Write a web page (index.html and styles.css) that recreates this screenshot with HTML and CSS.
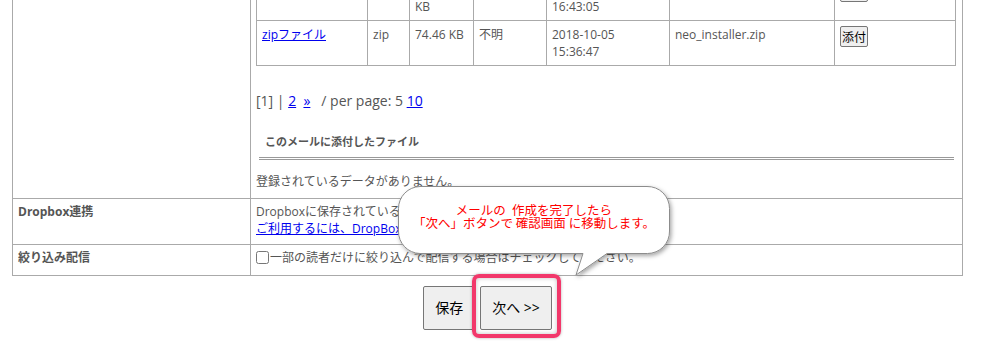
FILE: index.html
```html
<!DOCTYPE html>
<html lang="ja">
<head>
    <meta charset="UTF-8">
    <title>メール作成</title>
    <link rel="stylesheet" href="styles.css">
</head>
<body>
<div class="wrap">
    <table class="form-table">
        <colgroup>
            <col class="col-label">
            <col>
        </colgroup>
        <tr>
            <th></th>
            <td class="files-cell">
                <table class="files">
                    <colgroup>
                        <col class="c-name"><col class="c-type"><col class="c-size"><col class="c-dl"><col class="c-date"><col class="c-file"><col>
                    </colgroup>
                    <tr>
                        <td><a href="###">PDFファイル</a></td>
                        <td>pdf</td>
                        <td>1,536.20 KB</td>
                        <td>不明</td>
                        <td>2018-10-04<br>16:43:05</td>
                        <td>sample_manual.pdf</td>
                        <td><button class="attach" type="button">添付</button></td>
                    </tr>
                    <tr>
                        <td><a href="###">zipファイル</a></td>
                        <td>zip</td>
                        <td>74.46 KB</td>
                        <td>不明</td>
                        <td>2018-10-05<br>15:36:47</td>
                        <td>neo_installer.zip</td>
                        <td><button class="attach" type="button">添付</button></td>
                    </tr>
                </table>
                <p class="pager">[1] | <a href="###">2</a>&nbsp; <a href="###">&raquo;</a>&nbsp;&nbsp; / per page: 5 <a href="###">10</a></p>
                <h3 class="sub-title">このメールに添付したファイル</h3>
                <p class="empty">登録されているデータがありません。</p>
            </td>
        </tr>
        <tr>
            <th>Dropbox連携</th>
            <td>Dropboxに保存されているファイルを添付できます。<br><a href="###">ご利用するには、DropBoxとの連携設定が必要です。</a></td>
        </tr>
        <tr class="last-row">
            <th>絞り込み配信</th>
            <td><label><input type="checkbox" class="check">一部の読者だけに絞り込んで配信する場合はチェックしてください。</label></td>
        </tr>
    </table>

    <div class="actions">
        <button class="btn" type="button">保存</button>
        <span class="next-wrap"><button class="btn" type="button">次へ &gt;&gt;</button></span>

        <div class="bubble">
            <svg width="290" height="100" viewBox="0 0 290 100">
                <defs>
                    <filter id="shadow" x="-10%" y="-10%" width="120%" height="130%">
                        <feDropShadow dx="1.5" dy="2" stdDeviation="2" flood-color="#000" flood-opacity="0.35"/>
                    </filter>
                </defs>
                <path d="M30 5.5H257A22 22 0 0 1 279.5 27.5V50A22 22 0 0 1 257.5 72.5H217L186 94L193 72.5H30A22 22 0 0 1 8.5 50V27.5A22 22 0 0 1 30 5.5Z" fill="#fff" stroke="#8c8c8c" stroke-width="1" filter="url(#shadow)"/>
            </svg>
            <p class="bubble-text">メールの&ensp;作成を完了したら<br>「次へ」ボタンで 確認画面 に移動します。</p>
        </div>
    </div>
</div>
</body>
</html>
```

FILE: styles.css
```css
*{margin:0;padding:0;box-sizing:border-box;}
body{font-family:"Open Sans","Noto Sans CJK JP",sans-serif;font-size:12px;line-height:17px;color:#555;background:#fff;}
a{color:#0000ee;}

.wrap{position:relative;width:951px;margin:-31px 0 0 12px;}

.form-table{width:951px;border-collapse:collapse;table-layout:fixed;}
.form-table .col-label{width:238px;}
.form-table th,.form-table td{border:1px solid #aaa;vertical-align:top;text-align:left;padding:4px 6px 7px 5px;}
.form-table th{font-weight:bold;}
.form-table .files-cell{padding:5px 6px 8px 5px;}
.form-table .last-row th,.form-table .last-row td{padding-bottom:9px;}

.files{width:700px;border-collapse:collapse;table-layout:fixed;}
.files .c-name{width:111px;}
.files .c-type{width:42px;}
.files .c-size{width:64px;}
.files .c-dl{width:73px;}
.files .c-date{width:123px;}
.files .c-file{width:165px;}
.files td{border:1px solid #aaa;padding:5px 6px 5px 5px;vertical-align:top;line-height:17px;}
.attach{font-family:"Noto Sans CJK JP",sans-serif;font-size:12px;line-height:17px;height:21px;padding:0 1px;border:1px solid #767676;border-radius:2px;background:#efefef;color:#000;}

.pager{margin-top:25px;font-size:14px;line-height:19px;}
.sub-title{margin:24px 2px 0 3px;padding:0 6px 8px;font-size:11px;line-height:15px;font-weight:bold;border-bottom:3px double #999;}
.empty{margin-top:13px;}

.check{width:13px;height:13px;margin:0 1px 0 0;vertical-align:-2px;}

.actions{position:relative;text-align:center;padding:10px 0 20px;font-size:0;line-height:0;}
.btn{height:44px;padding:0 11px;font-family:"Open Sans","Noto Sans CJK JP",sans-serif;font-size:14px;line-height:20px;color:#000;background:#efefef;border:1px solid #767676;border-radius:2px;vertical-align:top;}
.next-wrap{position:relative;display:inline-block;margin-left:5px;vertical-align:top;}
.next-wrap::after{content:"";position:absolute;top:-12px;bottom:-8px;left:-8px;right:-9px;border:4px solid #f2386b;border-radius:7px;box-shadow:0 0 3px rgba(0,0,0,.3),inset 0 0 4px rgba(0,0,0,.25);}

.bubble{position:absolute;left:378px;top:-95px;width:290px;height:100px;}
.bubble svg{position:absolute;left:0;top:0;}
.bubble-text{position:absolute;left:8px;top:22px;width:272px;text-align:center;color:#f00;font-family:"Noto Sans CJK JP",sans-serif;font-size:12.5px;line-height:13px;}
```
